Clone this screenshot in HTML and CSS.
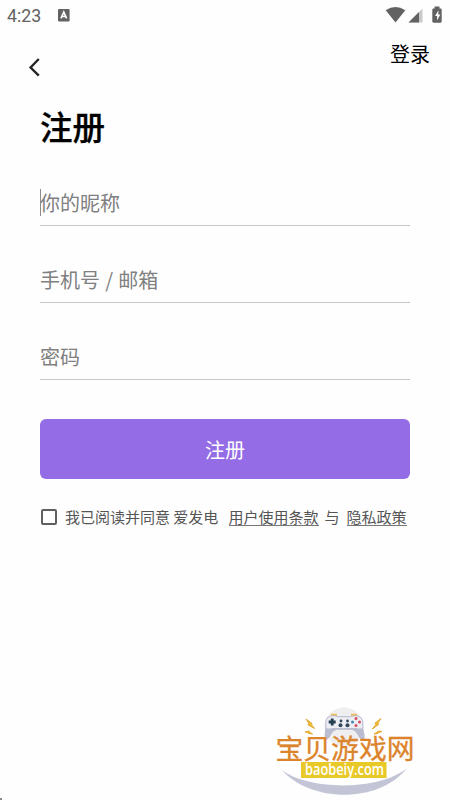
FILE: index.html
```html
<!DOCTYPE html>
<html lang="zh-CN">
<head>
<meta charset="utf-8">
<title>注册</title>
<link rel="stylesheet" href="styles.css">
</head>
<body>
<div class="status">
  <span class="clock">4:23</span>
  <svg class="app-icon" width="12" height="13" viewBox="0 0 12 13"><rect width="11.6" height="12.500" rx="1.2" fill="#626262"/><path d="M3 9.300 5.800 3l2.800 6.300M4.200 7.500h3.200" fill="none" stroke="#fff" stroke-width="1.7"/></svg>
  <svg class="signals" width="60" height="20" viewBox="385 5 60 20">
    <path d="M385.7 10.3q9.8-6.4 19.6 0L395.5 22.5z" fill="#626262"/>
    <path d="M422.5 8.5v14H408.500z" fill="#c9c9c9"/><path d="M419 12v10.500h-10.500z" fill="#626262"/>
    <path d="M434.500 6.500h5v2h1q1.200 0 1.200 1.200v11.600q0 1.400-1.200 1.400h-7q-1.200 0-1.200-1.400V9.700q0-1.200 1.200-1.200h1z" fill="#626262"/>
    <path d="m438.500 10.300-3.400 5.800h2v4.400l3.200-6h-2z" fill="#fff"/>
  </svg>
</div>
<header class="nav">
  <svg class="back" width="12" height="20" viewBox="0 0 12 20"><path d="M10.800 2 2.600 10.500l8.200 8.200" fill="none" stroke="#252528" stroke-width="2.400"/></svg>
  <a class="login">登录</a>
</header>
<main class="form">
  <h1>注册</h1>
  <div class="field focused">你的昵称</div>
  <div class="field contact">手机号 / 邮箱</div>
  <div class="field">密码</div>
  <button class="submit">注册</button>
  <div class="agree">
    <span class="check"></span>
    <span class="consent">我已阅读并同意 爱发电</span>
    <a class="terms">用户使用条款</a>
    <span class="and">与</span>
    <a class="privacy">隐私政策</a>
  </div>
</main>
<div class="corner"></div>
<svg class="brand" width="150" height="100" viewBox="270 700 150 100">
  <circle cx="344" cy="727" r="19.500" fill="#efeff1"/>
  <path d="M281 769C303 789 377 793 407 768C380 803.500 310 803.500 281 769z" fill="#c3c5d6"/>
  <path d="M331 714.800h6M351 714.800h6" stroke="#edbd52" stroke-width="2"/>
  <path d="M330.500 716q4-1 7.500.7h12.500q4-1.700 7.500-.7 4.200 1.200 4.800 5.500v8q1.700 5 1.300 9.500-3 1-4.300-1.500-3-7-7.500-8.300h-16q-4.500 1.300-7.500 8.300-1.500 2.500-3.600 1.500-.4-4.500.6-9.500v-8q.4-4.300 4.700-5.500z" fill="#ededf4" stroke="#a9abc0" stroke-width=".8"/>
  <path d="M325.800 728q3 1 6.500 0h24q3 1 6.500 0 1.600 5 1.200 11-3 1-4.300-1.500-3-7-7.500-8.300h-16q-4.500 1.300-7.500 8.300-1.500 2.500-3.600 1.500-.4-6 .7-11z" fill="#babccf"/>
  <path d="M332.200 718.500v7M328.700 722h7" stroke="#263e52" stroke-width="2.800"/>
  <g fill="#334559"><circle cx="341" cy="721" r="1.400"/><circle cx="347.500" cy="721" r="1.400"/><circle cx="340.500" cy="725.300" r="2"/><circle cx="347.500" cy="725.300" r="2"/></g>
  <g fill="#d84d62"><circle cx="356" cy="718.500" r="1.500"/><circle cx="356" cy="725.500" r="1.500"/><circle cx="359.500" cy="722" r="1.500"/></g><circle cx="352.500" cy="722" r="1.500" fill="#438aab"/>
  <g fill="#f1bd34" stroke="#e0a630" stroke-width=".9"><path d="m306 719 6 4.500-.3 1.500 3 3.500-6.700-3.500.6-1.800zM305 732l4-1 1.300 1.500 2.200 1.500-4-.5-.8-1zM381 718.500l-6 4.500.8 1.500-3.500 4.500 6.300-4.500-.5-1.700zM382 731.500l-4-.5-1 1.300-3 1.700 4-.5 1-1z"/></g>
  <text class="brand-name" x="275.500" y="758.500">宝贝游戏网</text>
  <rect x="301" y="762" width="85.500" height="16" fill="#e8c927"/>
  <text class="brand-url" x="305" y="774.500" textLength="79" lengthAdjust="spacingAndGlyphs">baobeiy.com</text>
</svg>
</body>
</html>
```
FILE: styles.css
```css
* { box-sizing: border-box; }
body {
  margin: 0;
  height: 800px;
  overflow: hidden;
  position: relative;
  background: #fefefe;
  color: #000;
  font-family: "Noto Sans CJK SC", sans-serif;
}
.status {
  height: 32px;
  padding: 5px 5px 0 7px;
  display: flex;
  align-items: flex-start;
}
.clock {
  width: 51px;
  font: 17.8px/22px Roboto, sans-serif;
  color: #626262;
}
.app-icon { margin-top: 4px; }
.signals { margin-left: auto; }
.nav {
  height: 64px;
  padding: 0 20px 0 28px;
  display: flex;
  justify-content: space-between;
  align-items: flex-start;
}
.back { margin-top: 25px; }
.login { margin-top: 7px; font-size: 20px; line-height: 30px; }
.form { padding: 0 40px; }
h1 {
  margin: 0;
  height: 82px;
  font-size: 32.5px;
  line-height: 60px;
  font-weight: 500;
  -webkit-text-stroke: .3px #000;
}
.field {
  height: 48px;
  margin-bottom: 29px;
  border-bottom: 1px solid #c6c6c6;
  font-size: 20px;
  line-height: 50px;
  color: #808080;
}
.contact { word-spacing: .7px; }
.focused { position: relative; }
.focused::before {
  content: "";
  position: absolute;
  left: 0;
  top: 11px;
  width: 1px;
  height: 27px;
  background: #8c8c8c;
}
.submit {
  display: block;
  width: 370px;
  height: 60px;
  margin: 39.4px 0 0;
  padding: 2px 0 0;
  border: 0;
  border-radius: 6px;
  background: #946ce6;
  color: #fff;
  font: 20px/58px "Noto Sans CJK SC", sans-serif;
}
.agree {
  display: flex;
  align-items: center;
  height: 22px;
  margin-top: 26.6px;
  padding-left: 1px;
  font-size: 15px;
  line-height: 22px;
  color: #555;
  white-space: nowrap;
}
.check {
  width: 16px;
  height: 16px;
  margin-right: 8px;
  border: 2px solid #606060;
  border-radius: 2px;
}
.consent { width: 163.5px; }
.terms, .privacy { height: 18px; line-height: 18px; border-bottom: 1px solid #777; }
.and { margin: 0 7px 0 6px; }
.corner {
  position: absolute;
  left: 0;
  bottom: 0;
  width: 2px;
  height: 2px;
  background: #888;
}
.brand { position: absolute; left: 270px; top: 700px; }
.brand-name { font: 400 27.8px "Noto Sans CJK SC", sans-serif; fill: #dc842c; stroke: #dc842c; stroke-width: .3px; }
.brand-url { font: 600 15.5px "Open Sans", sans-serif; fill: #fff; }
```
